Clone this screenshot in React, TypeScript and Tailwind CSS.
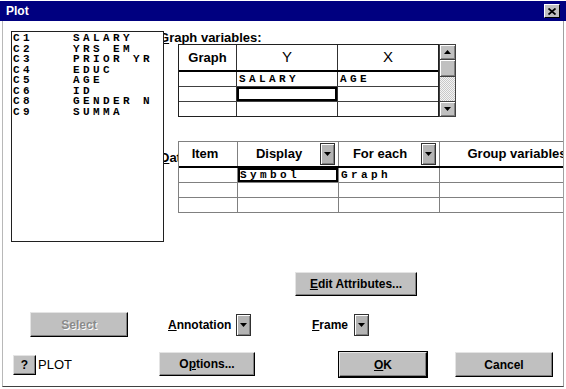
import React from "react";

const sans = "font-['Liberation_Sans',Arial,sans-serif]";
const mono = "font-['Liberation_Mono',monospace] font-bold text-[11px] tracking-[3.4px] leading-[10.5px] whitespace-pre";

const vars = [
  ["C1", "SALARY"],
  ["C2", "YRS EM"],
  ["C3", "PRIOR YR"],
  ["C4", "EDUC"],
  ["C5", "AGE"],
  ["C6", "ID"],
  ["C8", "GENDER N"],
  ["C9", "SUMMA"],
];

function Tri({ up = false }: { up?: boolean }) {
  return (
    <svg width="7" height="4" viewBox="0 0 7 4">
      <path d={up ? "M0 4h7L3.5 0z" : "M0 0h7L3.5 4z"} fill="black" />
    </svg>
  );
}

function DropBtn() {
  return (
    <div className="flex items-center justify-center w-[15px] h-[22px] shrink-0 bg-[#b4b4b4] border border-[#303030] shadow-[inset_1px_1px_0_#fff,inset_-1px_-1px_0_#808080]">
      <Tri />
    </div>
  );
}

function Btn({
  className = "",
  children,
  def = false,
  disabled = false,
}: {
  className?: string;
  children: React.ReactNode;
  def?: boolean;
  disabled?: boolean;
}) {
  return (
    <div
      className={`flex items-center justify-center shrink-0 bg-[#c0c0c0] border border-t-[#e4e4e4] border-l-[#e4e4e4] border-r-black border-b-black shadow-[inset_-1px_-1px_0_#808080] text-[12px] font-bold ${
        def ? "ring-1 ring-black" : ""
      } ${disabled ? "text-[#8a8a8a] [text-shadow:1px_1px_0_#fff]" : "text-black"} ${className}`}
    >
      {children}
    </div>
  );
}

export default function App() {
  return (
    <div className={`w-[566px] h-[389px] bg-white flex flex-col pt-[1px] ${sans}`}>
      {/* title bar */}
      <div className="h-[20px] bg-[#000080] flex items-center justify-between pl-[6px] pr-[6px] shrink-0">
        <span className="text-white text-[12px] font-bold">Plot</span>
        <div className="w-[16px] h-[14px] bg-[#c0c0c0] flex items-center justify-center border border-t-white border-l-white border-r-black border-b-black">
          <svg width="8" height="7" viewBox="0 0 8 7">
            <path d="M0.5 0.5L7.5 6.5M7.5 0.5L0.5 6.5" stroke="black" strokeWidth="1.8" />
          </svg>
        </div>
      </div>

      {/* body */}
      <div className="flex-1 flex flex-col ml-[2px] mr-[2px] mb-[2px] border-l border-r border-b border-l-[#b8b8b8] border-r-[#a0a0a0] border-b-[#404040] overflow-hidden">
        <div className="flex items-start h-[221px] shrink-0">
          {/* variable list */}
          <div className="relative z-10 ml-[8px] mt-[10px] w-[153px] h-[211px] shrink-0 bg-white border border-[#202020] pl-[1px] pt-[1px]">
            {vars.map(([c, n]) => (
              <div key={c} className={mono}>
                {c.padEnd(6, " ") + n}
              </div>
            ))}
          </div>

          <div className="flex flex-col min-w-0">
            <div className="mt-[10px] -ml-[5px] h-[13px] text-[13px] leading-[13px] font-bold whitespace-nowrap">
              <span className="underline">G</span>raph variables:
            </div>
            {/* graph variables table */}
            <div className="flex ml-[14px]">
              <div className="w-[261px] border border-[#202020] bg-white">
                <div className="flex h-[27px] border-b-2 border-black">
                  <div className="w-[58px] border-r border-[#303030] flex items-center justify-center text-[13px] font-bold">Graph</div>
                  <div className="w-[101px] border-r border-[#303030] flex items-center justify-center text-[15px]">Y</div>
                  <div className="w-[100px] flex items-center justify-center text-[15px]">X</div>
                </div>
                <div className="flex h-[15px] border-b border-[#404040]">
                  <div className="w-[58px] border-r border-[#303030]" />
                  <div className={`w-[101px] border-r border-[#303030] pl-[2px] flex items-center ${mono}`}>SALARY</div>
                  <div className={`w-[100px] pl-[2px] flex items-center ${mono}`}>AGE</div>
                </div>
                <div className="flex h-[15px] border-b border-[#404040]">
                  <div className="w-[58px] border-r border-[#303030]" />
                  <div className="w-[101px] border-r border-[#303030] shadow-[inset_0_0_0_2px_#000]" />
                  <div className="w-[100px]" />
                </div>
                <div className="flex h-[14px]">
                  <div className="w-[58px] border-r border-[#303030]" />
                  <div className="w-[101px] border-r border-[#303030]" />
                  <div className="w-[100px]" />
                </div>
              </div>
              {/* scrollbar */}
              <div className="w-[17px] h-[73px] flex flex-col border border-[#404040] bg-[repeating-conic-gradient(#c8c8c8_0_25%,#f4f4f4_0_50%)] bg-[length:2px_2px]">
                <div className="h-[15px] bg-[#c0c0c0] flex items-center justify-center shadow-[inset_1px_1px_0_#fff,inset_-1px_-1px_0_#808080] border-b border-[#404040]">
                  <Tri up />
                </div>
                <div className="h-[17px] bg-[#c0c0c0] shadow-[inset_1px_1px_0_#fff,inset_-1px_-1px_0_#808080] border-b border-[#404040]" />
                <div className="flex-1" />
                <div className="h-[15px] bg-[#c0c0c0] flex items-center justify-center shadow-[inset_1px_1px_0_#fff,inset_-1px_-1px_0_#808080] border-t border-[#404040]">
                  <Tri />
                </div>
              </div>
            </div>

            {/* data display table */}
            <div className="flex mt-[24px]">
              <div className="w-[14px] overflow-hidden shrink-0">
                <div className="-ml-[4px] pt-[7px] text-[13px] font-bold whitespace-nowrap">
                  <span className="underline">D</span>ata display:
                </div>
              </div>
              <div className="shrink-0 border-t border-l border-b border-[#808080] bg-white">
                <div className="flex h-[26px] border-b-2 border-black">
                  <div className="w-[59px] border-r border-[#808080] flex items-center justify-center pr-[6px] text-[13px] font-bold">Item</div>
                  <div className="w-[101px] border-r border-[#808080] flex items-center pr-[3px]">
                    <span className="flex-1 text-center text-[13px] font-bold">Display</span>
                    <DropBtn />
                  </div>
                  <div className="w-[101px] border-r border-[#808080] flex items-center pr-[3px]">
                    <span className="flex-1 text-center text-[13px] font-bold whitespace-nowrap">For each</span>
                    <DropBtn />
                  </div>
                  <div className="w-[154px] flex items-center justify-center text-[13px] font-bold whitespace-nowrap">Group variables</div>
                </div>
                <div className="flex h-[15px] border-b border-[#808080]">
                  <div className="w-[59px] border-r border-[#808080]" />
                  <div className={`w-[101px] border-r border-[#808080] pl-[2px] flex items-center shadow-[inset_0_0_0_2px_#000] ${mono}`}>Symbol</div>
                  <div className={`w-[101px] border-r border-[#808080] pl-[2px] flex items-center ${mono}`}>Graph</div>
                  <div className="w-[154px]" />
                </div>
                <div className="flex h-[15px] border-b border-[#808080]">
                  <div className="w-[59px] border-r border-[#808080]" />
                  <div className="w-[101px] border-r border-[#808080]" />
                  <div className="w-[101px] border-r border-[#808080]" />
                  <div className="w-[154px]" />
                </div>
                <div className="flex h-[14px]">
                  <div className="w-[59px] border-r border-[#808080]" />
                  <div className="w-[101px] border-r border-[#808080]" />
                  <div className="w-[101px] border-r border-[#808080]" />
                  <div className="w-[154px]" />
                </div>
              </div>
            </div>
          </div>
        </div>

        {/* edit attributes */}
        <div className="flex mt-[30px] pl-[292px]">
          <Btn className="w-[122px] h-[24px]">
            <span>
              <span className="underline">E</span>dit Attributes...
            </span>
          </Btn>
        </div>

        {/* select / annotation / frame */}
        <div className="flex items-center mt-[16px] pl-[27px] h-[25px]">
          <Btn className="w-[98px] h-[25px]" disabled>
            Select
          </Btn>
          <div className="flex items-center ml-[40px] gap-[5px] w-[144px]">
            <span className="text-[12px] font-bold">
              <span className="underline">A</span>nnotation
            </span>
            <DropBtn />
          </div>
          <div className="flex items-center gap-[6px]">
            <span className="text-[12px] font-bold">
              <span className="underline">F</span>rame
            </span>
            <DropBtn />
          </div>
        </div>

        {/* bottom buttons */}
        <div className="flex items-start mt-[15px] pl-[10px]">
          <div className="flex items-center w-[146px] mt-[3px]">
            <Btn className="w-[23px] h-[20px]">?</Btn>
            <span className="ml-[2px] text-[13px]">PLOT</span>
          </div>
          <Btn className="w-[96px] h-[24px]">
            <span>
              O<span className="underline">p</span>tions...
            </span>
          </Btn>
          <Btn className="w-[88px] h-[25px] ml-[84px]" def>
            <span>
              <span className="underline">O</span>K
            </span>
          </Btn>
          <Btn className="w-[98px] h-[25px] ml-[28px]">Cancel</Btn>
        </div>
      </div>
    </div>
  );
}
